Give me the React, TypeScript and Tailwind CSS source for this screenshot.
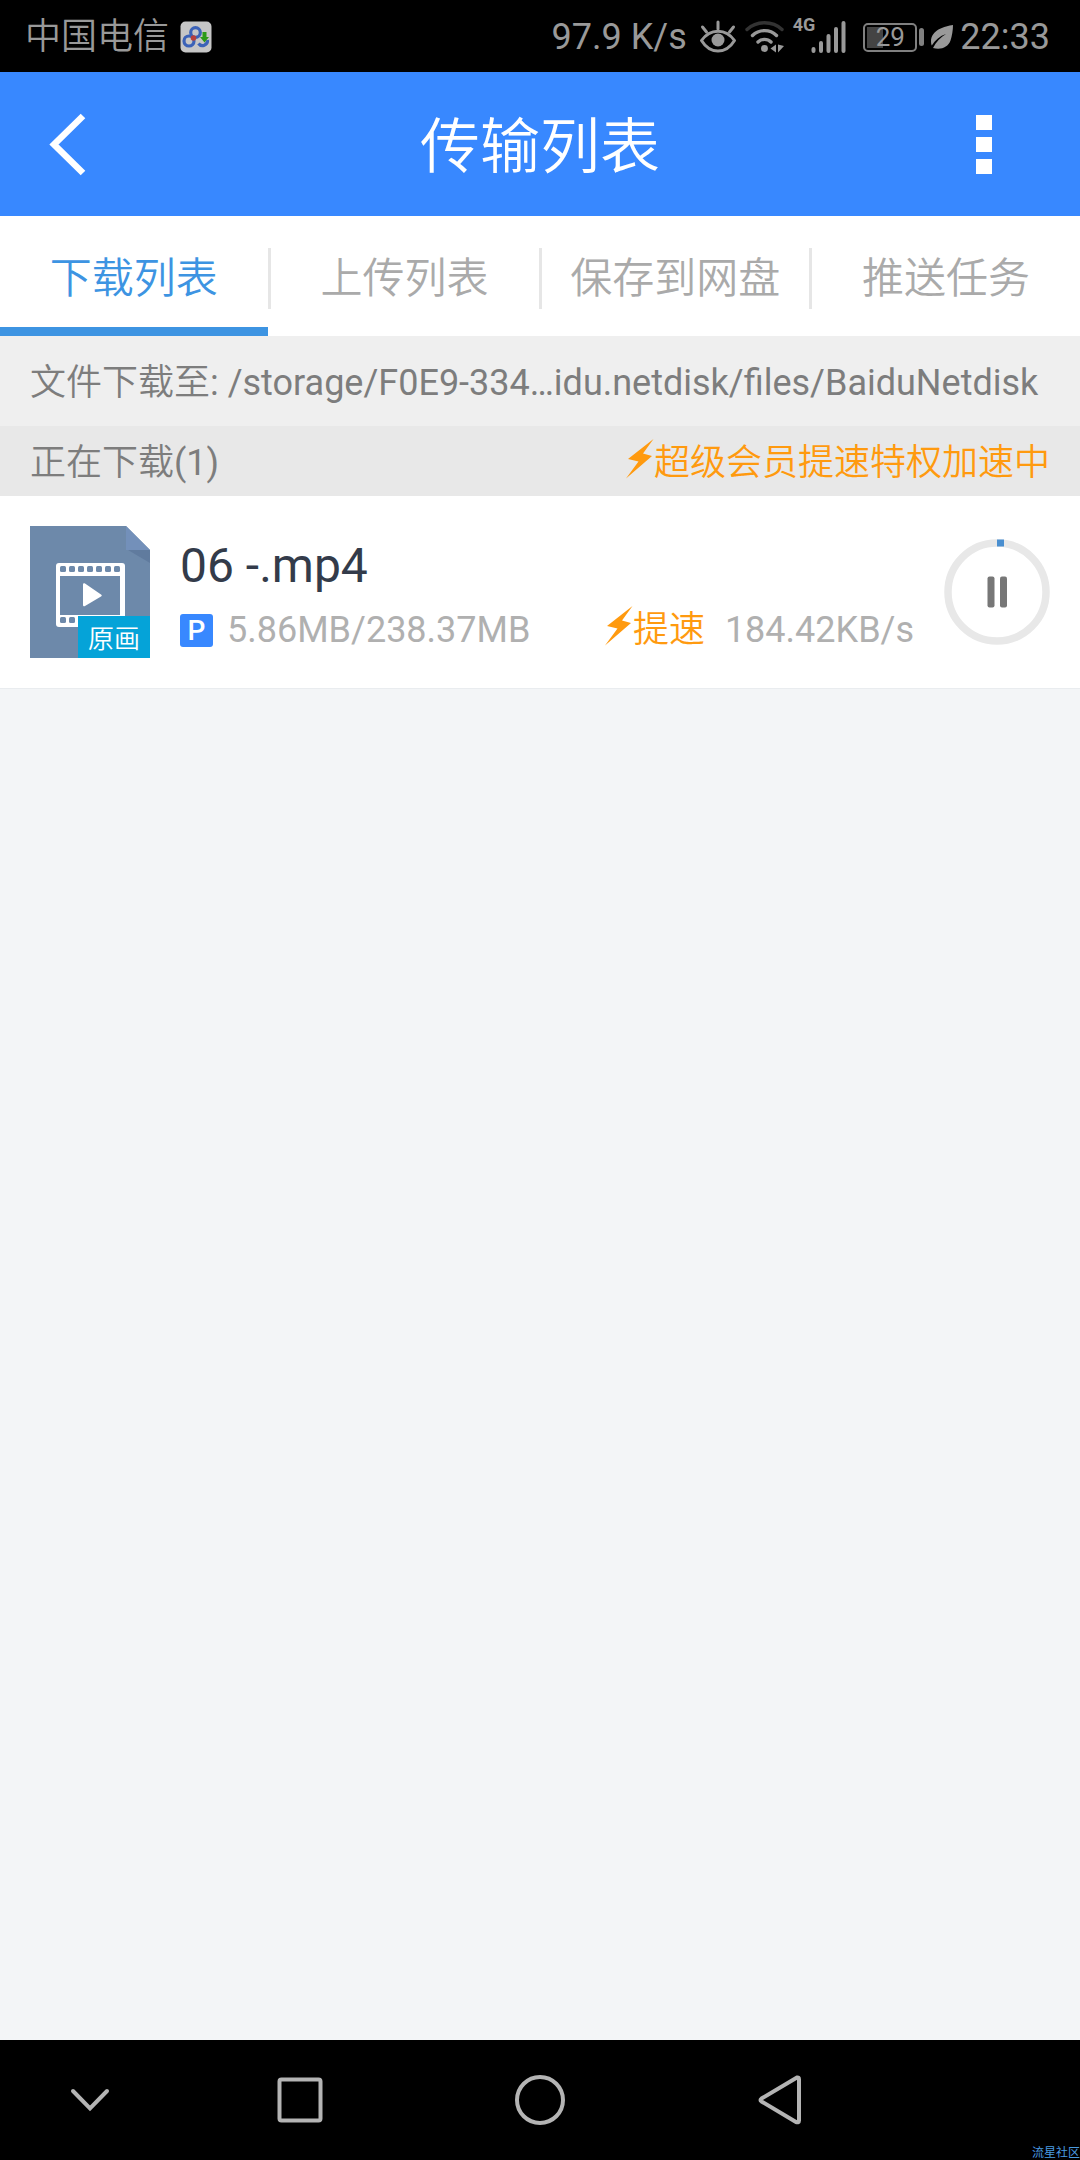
import React, { useState } from 'react';

const tabs = ['下载列表', '上传列表', '保存到网盘', '推送任务'];

function Bolt() {
  return (
    <svg width="28" height="40" viewBox="0 0 28 40" fill="#ff9a0f" className="shrink-0 mb-2">
      <path d="M27.500 0 2 20 12.500 22.500 0 39.500 26 17 17 14.500z" />
    </svg>
  );
}

function NetdiskIcon() {
  return (
    <svg width="32" height="32" viewBox="0 0 32 32" fill="none">
      <rect x="0.500" y="0.500" width="31" height="31" rx="5" fill="#c6c6c6" />
      <circle cx="9" cy="20" r="5" stroke="#3b62b8" strokeWidth="3.200" />
      <circle cx="15.500" cy="11.500" r="4.800" stroke="#3b62b8" strokeWidth="3.200" />
      <path d="M18.500 22.500a5 5 0 0 0 9-3.500" stroke="#3b62b8" strokeWidth="3.200" />
      <circle cx="13.500" cy="17" r="2.800" fill="#b8403c" />
      <path d="M22.500 11h4v5h2.500l-4.500 5.500-4.500-5.500h2.500z" fill="#2c9a18" />
    </svg>
  );
}

function StatusBar() {
  return (
    <div className="h-18 shrink-0 bg-black text-[#999999] flex items-center justify-between pt-[2px] pl-[25px] pr-[30px] text-[36px] leading-[42px]">
      <div className="flex items-center gap-[11px]">
        <span className="font-[350]">中国电信</span>
        <NetdiskIcon />
      </div>
      <div className="flex items-center">
        <span>97.9 K/s</span>
        {/* eye comfort */}
        <svg width="38" height="34" viewBox="0 0 38 34" fill="none" stroke="#999999" strokeWidth="3" strokeLinecap="round" className="ml-3">
          <path d="M2.500 20.500C11 8 27 8 35.500 20.500 27 34.500 11 34.500 2.500 20.500z" strokeLinejoin="round" />
          <path d="M19 2v7M3.500 7l4 5M34.500 7l-4 5" />
          <circle cx="19" cy="20" r="6.500" fill="#999999" stroke="none" />
        </svg>
        {/* wifi with traffic arrows */}
        <svg width="40" height="34" viewBox="0 0 40 34" fill="none" strokeLinecap="round" strokeWidth="3.400" className="ml-2">
          <path d="M2 9.500C11.500 0.500 27.500 0.500 37 9.500" stroke="#333333" />
          <path d="M7.500 15.500c6.500-6.500 17.500-6.500 24 0" stroke="#999999" />
          <path d="M13 22c3.500-3.500 9.500-3.500 13 0" stroke="#999999" />
          <circle cx="19.500" cy="28.500" r="3.400" fill="#999999" />
          <path d="M31 24.500v8l-5.500-4zM33 24.500v8l6-6.500z" fill="#999999" />
        </svg>
        <span className="self-start ml-2 text-[18px] leading-[18px] font-bold">4G</span>
        <svg width="36" height="34" viewBox="0 0 36 34" stroke="#999999" strokeWidth="4" strokeLinecap="round" className="-ml-1">
          <path d="M2.500 29v2M10 23v8M17.500 16v15M25 9v22M32.500 3v28" />
        </svg>
        <span className="relative ml-4 w-[54px] h-[29px] flex items-center justify-center rounded-[5px] border-2 border-[#808080]">
          <span className="absolute left-[2px] top-[2px] bottom-[2px] w-4 bg-[#444444]" />
          <span className="relative text-[26px] leading-[26px]">29</span>
        </span>
        <span className="ml-[2px] w-[5px] h-[18px] rounded-sm bg-[#808080]" />
        <svg width="24" height="26" viewBox="0 0 24 26" className="ml-[6px]">
          <path d="M23 1C15 2 1 6 1 17.500c0 1.500.3 3 .8 4C5 16 10 12 16 10 10.500 13.500 6 18 3 24c8 2 15-.5 17.500-7.500C22 12 23 6 23 1z" fill="#999999" />
        </svg>
        <span className="ml-[6px]">22:33</span>
      </div>
    </div>
  );
}

function Header() {
  return (
    <header className="h-36 shrink-0 bg-[#3888ff] text-white grid grid-cols-3 items-center px-[46px]">
      <button aria-label="返回" className="justify-self-start">
        <svg width="44" height="64" viewBox="0 0 44 64" fill="none" stroke="white" strokeWidth="6.500">
          <path d="M37 4 8 32.500 37 61" />
        </svg>
      </button>
      <h1 className="pt-2 text-center text-[60px] leading-[72px] font-[350]">传输列表</h1>
      <button aria-label="更多" className="justify-self-end flex flex-col gap-[7px] px-[42px]">
        <span className="w-4 h-[15px] bg-white" />
        <span className="w-4 h-[15px] bg-white" />
        <span className="w-4 h-[15px] bg-white" />
      </button>
    </header>
  );
}

function Tabs() {
  const [active, setActive] = useState(0);

  return (
    <nav className="h-30 shrink-0 bg-white flex">
      {tabs.map((tab, i) => (
        <React.Fragment key={tab}>
          {i > 0 && <span className="mt-8 w-[3px] h-[61px] bg-[#e6e6e6]" />}
          <button
            onClick={() => setActive(i)}
            className={`flex-1 pt-[14px] border-b-[9px] text-[42px] leading-[50px] font-[350] ${
              i === active ? 'text-[#3d94e2] border-[#3d94e2]' : 'text-[#aaaaaa] border-transparent'
            }`}
          >
            {tab}
          </button>
        </React.Fragment>
      ))}
    </nav>
  );
}

function FileIcon() {
  return (
    <div className="relative w-[120px] h-[132px] shrink-0">
      <svg width="120" height="132" viewBox="0 0 120 132">
        <path d="M0 0h96l24 24v108H0z" fill="#6d89aa" />
        <path d="M98 24h22v13z" fill="#607b9e" />
        <path d="M96 0l24 24H96z" fill="#7390ba" />
        <rect x="26" y="37" width="69" height="64" rx="3" fill="white" />
        <rect x="30" y="50" width="60" height="39" fill="#6d89aa" />
        <path d="M53 58.500c0-1 1-1.500 2-1l16 11c1 .6 1 1.500 0 2L55 80c-1 .6-2 0-2-1z" fill="white" />
        {[30, 39, 48, 57, 66, 75, 84].map((x) => (
          <g key={x} fill="#6d89aa">
            <rect x={x} y="40" width="6" height="6" rx="1.500" />
            <rect x={x} y="91" width="6" height="6" rx="1.500" />
          </g>
        ))}
      </svg>
      <span className="absolute right-0 bottom-0 w-[72px] h-[42px] pt-[2px] bg-[#05a3d8] text-white text-[26px] leading-[42px] text-center font-[350]">
        原画
      </span>
    </div>
  );
}

function DownloadItem() {
  return (
    <li className="flex items-center bg-white h-[193px] px-[30px] border-b border-[#e9ecef]">
      <FileIcon />
      <div className="flex-1 min-w-0 ml-[30px] pt-3">
        <p className="text-[48px] leading-[60px] text-[#333b4a]">06 -.mp4</p>
        <div className="flex items-center mt-1 text-[36px] leading-[60px] text-[#b0b0b0]">
          <span className="w-[33px] h-[33px] rounded-[3px] bg-[#3888ff] text-white text-[28px] leading-[33px] font-medium text-center">P</span>
          <span className="ml-[14px]">5.86MB/238.37MB</span>
          <span className="ml-auto flex items-center text-[#ff9a0f] font-[350]">
            <Bolt />
            提速
          </span>
          <span className="ml-5 mr-[30px]">184.42KB/s</span>
        </div>
      </div>
      <button aria-label="暂停" className="shrink-0">
        <svg width="106" height="106" viewBox="0 0 106 106" fill="none">
          <circle cx="53" cy="53" r="49" stroke="#e8e8e8" strokeWidth="7.500" />
          <path d="M53 4h7" stroke="#4a8fd0" strokeWidth="7" />
          <rect x="43.500" y="37.500" width="7" height="31" rx="2" fill="#777777" />
          <rect x="56" y="37.500" width="7" height="31" rx="2" fill="#777777" />
        </svg>
      </button>
    </li>
  );
}

function NavBar() {
  return (
    <footer className="relative h-30 shrink-0 bg-black grid grid-cols-[3fr_4fr_4fr_4fr_3fr] items-center justify-items-center">
      <button aria-label="收起">
        <svg width="40" height="24" viewBox="0 0 40 24" fill="none" stroke="#b4b4b4" strokeWidth="4" strokeLinecap="round">
          <path d="M3 3 20 20.500 37 3" />
        </svg>
      </button>
      <button aria-label="最近任务">
        <svg width="46" height="46" viewBox="0 0 46 46" fill="none" stroke="#b4b4b4" strokeWidth="4">
          <rect x="2.500" y="2.500" width="41" height="41" rx="2" />
        </svg>
      </button>
      <button aria-label="主屏幕">
        <svg width="50" height="50" viewBox="0 0 50 50" fill="none" stroke="#b4b4b4" strokeWidth="4">
          <circle cx="25" cy="25" r="23" />
        </svg>
      </button>
      <button aria-label="返回上一页">
        <svg width="44" height="50" viewBox="0 0 44 50" fill="none" stroke="#b4b4b4" strokeWidth="4" strokeLinejoin="round">
          <path d="M39 2.500Q41 2 41 4.500v41q0 2.500-3 1.500L3.500 26.500q-2-1.500 0-3z" />
        </svg>
      </button>
      <span className="absolute right-0 bottom-0 text-[12px] leading-[14px] text-[#4a9be0]">流星社区</span>
    </footer>
  );
}

export default function App() {
  return (
    <div className="min-h-screen flex flex-col bg-[#f3f5f7] font-['Roboto','Noto_Sans_CJK_SC',sans-serif]">
      <StatusBar />
      <Header />
      <Tabs />
      <main className="flex-1">
        <p className="h-[90px] pt-[2px] px-[30px] bg-[#efefef] text-[#7d7d7d] text-[36px] leading-[90px] whitespace-nowrap overflow-hidden">
          <span className="font-[350]">文件下载至</span>: /storage/F0E9-334…idu.netdisk/files/BaiduNetdisk
        </p>
        <div className="h-[70px] pt-1 px-[30px] bg-[#e8e8e8] flex items-center justify-between text-[36px] leading-[66px]">
          <h2 className="text-[#7d7d7d]">
            <span className="font-[350]">正在下载</span>(1)
          </h2>
          <span className="flex items-center text-[#ff9a0f] font-[350]">
            <Bolt />
            超级会员提速特权加速中
          </span>
        </div>
        <ul>
          <DownloadItem />
        </ul>
      </main>
      <NavBar />
    </div>
  );
}
